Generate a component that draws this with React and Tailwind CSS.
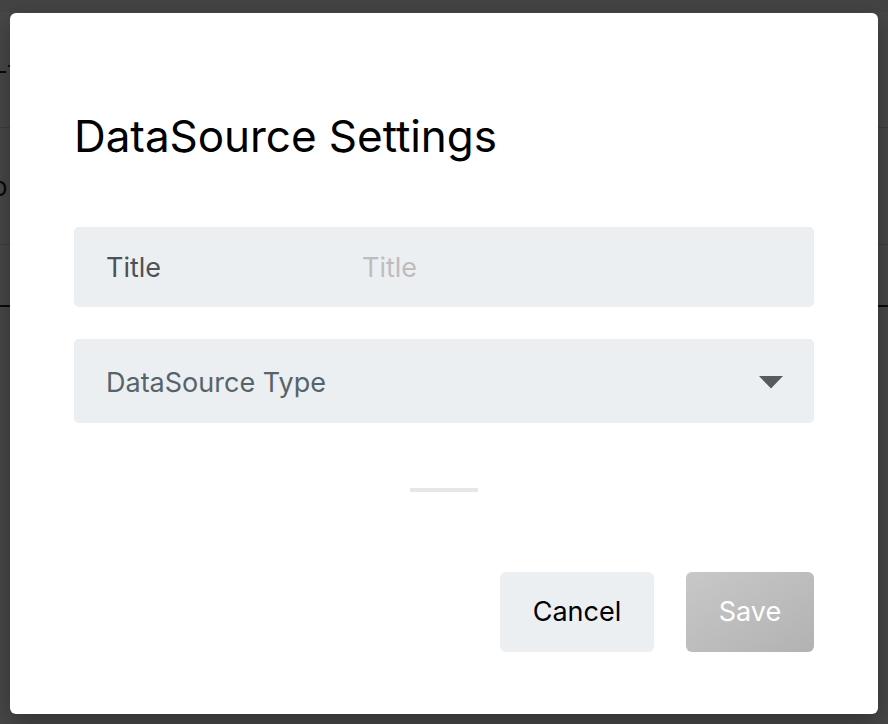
export default function App() {
  return (
    <div
      className="relative h-[724px] w-[888px] overflow-hidden bg-white"
      style={{ fontFamily: 'Inter, "Noto Sans", sans-serif' }}
    >
      {/* page behind the dialog */}
      <div className="h-[12px] bg-[#f2f2f2]" />
      <div className="flex h-[116px] items-center border-b border-[#dcdcdc] text-[26px] text-[#222]">
        <span className="-ml-[4px] mt-[2px]">-f</span>
      </div>
      <div className="flex h-[117px] items-center border-b border-[#dcdcdc] text-[26px] text-[#222]">
        <span className="-ml-[8px]">o</span>
      </div>
      <div className="h-[62px] border-b-2 border-[#222]" />

      {/* overlay */}
      <div className="absolute inset-0 bg-[#000000]/[0.72]" />

      {/* dialog */}
      <div className="absolute left-[10px] top-[13px] flex h-[701px] w-[868px] flex-col rounded-[6px] bg-white px-16 pt-[97px] shadow-[0_8px_24px_rgba(0,0,0,0.3)]">
        <h1 className="text-[44px] leading-[53px] tracking-[-0.05px] text-black">DataSource Settings</h1>

        <div className="mt-[64px] flex h-[80px] items-center rounded-[5px] bg-[#eceff1] pl-[32px] pt-[2px] text-[27px]">
          <span className="w-[256px] text-[#4f5254]">Title</span>
          <span className="text-[#bdbdbd]">Title</span>
        </div>

        <div className="mt-[32px] flex h-[84px] items-center justify-between rounded-[5px] bg-[#eceff1] pl-[32px] pr-[31px] text-[27px]">
          <span className="pt-[5px] text-[#57636b]">DataSource Type</span>
          <svg width="24" height="13" viewBox="0 0 24 13" className="mt-[2px]">
            <path d="M0 0 L24 0 L12 12.5 Z" fill="#555b5f" />
          </svg>
        </div>

        <div className="mt-[65px] flex justify-center">
          <div className="h-[4px] w-[68px] bg-[#e6e6e6]" />
        </div>

        <div className="mt-[80px] flex justify-end gap-8">
          <button className="h-[80px] w-[154px] rounded-[6px] bg-[#eceff1] text-[27px] text-black">
            Cancel
          </button>
          <button className="h-[80px] w-[128px] rounded-[6px] bg-gradient-to-br from-[#c8c8c8] to-[#b2b2b2] text-[27px] text-white">
            Save
          </button>
        </div>
      </div>
    </div>
  )
}
